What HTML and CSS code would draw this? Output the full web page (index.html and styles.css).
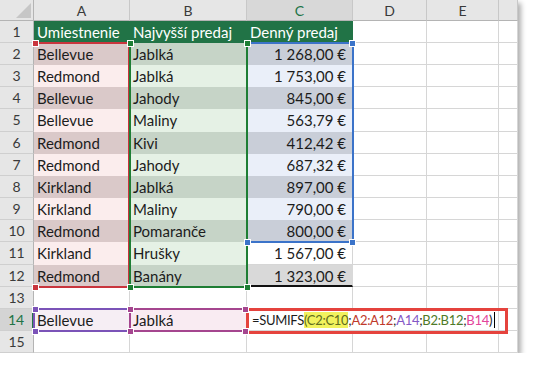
FILE: index.html
```html
<!DOCTYPE html>
<html lang="sk">
<head>
<meta charset="utf-8">
<title>SUMIFS</title>
<link rel="stylesheet" href="styles.css">
</head>
<body>
<div class="sheet">
  <div class="c corner"><svg width="33" height="20" viewBox="0 0 33 20"><polygon points="31,3 31,18 16,18" fill="#c6c6c6"/></svg></div>
  <div class="c ch">A</div><div class="c ch">B</div><div class="c ch sel">C</div><div class="c ch">D</div><div class="c ch">E</div><div class="c ch"></div>

  <div class="c rh">1</div><div class="c hd">Umiestnenie</div><div class="c hd">Najvyšší predaj</div><div class="c hd">Denný predaj</div><div class="c"></div><div class="c"></div><div class="c"></div>
  <div class="c rh">2</div><div class="c a1">Bellevue</div><div class="c b1">Jablká</div><div class="c c1 num">1 268,00 €</div><div class="c"></div><div class="c"></div><div class="c"></div>
  <div class="c rh">3</div><div class="c a0">Redmond</div><div class="c b0">Jablká</div><div class="c c0 num">1 753,00 €</div><div class="c"></div><div class="c"></div><div class="c"></div>
  <div class="c rh">4</div><div class="c a1">Bellevue</div><div class="c b1">Jahody</div><div class="c c1 num">845,00 €</div><div class="c"></div><div class="c"></div><div class="c"></div>
  <div class="c rh">5</div><div class="c a0">Bellevue</div><div class="c b0">Maliny</div><div class="c c0 num">563,79 €</div><div class="c"></div><div class="c"></div><div class="c"></div>
  <div class="c rh">6</div><div class="c a1">Redmond</div><div class="c b1">Kivi</div><div class="c c1 num">412,42 €</div><div class="c"></div><div class="c"></div><div class="c"></div>
  <div class="c rh">7</div><div class="c a0">Redmond</div><div class="c b0">Jahody</div><div class="c c0 num">687,32 €</div><div class="c"></div><div class="c"></div><div class="c"></div>
  <div class="c rh">8</div><div class="c a1">Kirkland</div><div class="c b1">Jablká</div><div class="c c1 num">897,00 €</div><div class="c"></div><div class="c"></div><div class="c"></div>
  <div class="c rh">9</div><div class="c a0">Kirkland</div><div class="c b0">Maliny</div><div class="c c0 num">790,00 €</div><div class="c"></div><div class="c"></div><div class="c"></div>
  <div class="c rh">10</div><div class="c a1">Redmond</div><div class="c b1">Pomaranče</div><div class="c c1 num">800,00 €</div><div class="c"></div><div class="c"></div><div class="c"></div>
  <div class="c rh">11</div><div class="c a0">Kirkland</div><div class="c b0">Hrušky</div><div class="c num">1 567,00 €</div><div class="c"></div><div class="c"></div><div class="c"></div>
  <div class="c rh">12</div><div class="c a1">Redmond</div><div class="c b1">Banány</div><div class="c g12 num">1 323,00 €</div><div class="c"></div><div class="c"></div><div class="c"></div>
  <div class="c rh">13</div><div class="c"></div><div class="c"></div><div class="c"></div><div class="c"></div><div class="c"></div><div class="c"></div>
  <div class="c rh rsel">14</div><div class="c p14">Bellevue</div><div class="c m14">Jablká</div><div class="c fx">=SUMIFS<span class="hl">(C2:C10</span>;<span class="fr">A2:A12</span>;<span class="fp">A14</span>;<span class="fg">B2:B12</span>;<span class="fm">B14</span>)<span class="caret"></span></div><div class="c"></div>
  <div class="c rh">15</div><div class="c"></div><div class="c"></div><div class="c"></div><div class="c"></div><div class="c"></div><div class="c"></div>

  <div class="rng r-red"></div>
  <div class="rng r-blue"></div>
  <div class="rng r-green"></div>
  <div class="rng r-purple"></div>
  <div class="rng r-mag"></div>
  <div class="fxbox"></div>

  <div class="hnd h-red" style="left:32px;top:40px"></div>
  <div class="hnd h-red" style="left:32px;top:284px"></div>
  <div class="hnd h-green" style="left:127px;top:40px"></div>
  <div class="hnd h-green" style="left:127px;top:284px"></div>
  <div class="hnd h-green" style="left:244px;top:40px"></div>
  <div class="hnd h-green" style="left:244px;top:284px"></div>
  <div class="hnd h-blue" style="left:349px;top:40px"></div>
  <div class="hnd h-blue" style="left:349px;top:239px"></div>
  <div class="hnd h-blue" style="left:244px;top:239px"></div>
  <div class="hnd h-purple" style="left:32px;top:306px"></div>
  <div class="hnd h-purple" style="left:32px;top:328px"></div>
  <div class="hnd h-mag" style="left:127px;top:306px"></div>
  <div class="hnd h-mag" style="left:127px;top:328px"></div>
  <div class="hnd h-mag" style="left:242px;top:306px"></div>
  <div class="hnd h-mag" style="left:242px;top:328px"></div>
</div>
</body>
</html>
```
FILE: styles.css
```css
html, body {
  margin: 0;
  padding: 0;
  background: #ffffff;
}

.sheet {
  position: relative;
  width: 518px;
  height: 353px;
  display: grid;
  grid-template-columns: 34px 96px 117px 106px 74px 72px 19px;
  grid-template-rows: 21px 22px 22px 22px 22px 23px 22px 22px 22px 22px 22px 23px 22px 22px 22px 22px;
  background: #ffffff;
  box-shadow: 3px 3px 5px rgba(0, 0, 0, 0.32);
  font-family: Lato, "Liberation Sans", sans-serif;
  overflow: visible;
}

.c {
  box-sizing: border-box;
  border-right: 1px solid #d6d6d6;
  border-bottom: 1px solid #d6d6d6;
  padding: 1px 3px 0 3px;
  font-size: 15px;
  line-height: 20px;
  color: #1c1c1c;
  white-space: nowrap;
  overflow: hidden;
}

.corner {
  background: #e6e6e6;
  border-color: #b4b4b4;
  padding: 0;
}
.corner svg { display: block; }

.ch {
  background: #e6e6e6;
  border-right-color: #c8c8c8;
  border-bottom-color: #b4b4b4;
  text-align: center;
  color: #3a3a3a;
  font-size: 14px;
  line-height: 19px;
}
.ch.sel {
  background: #d8d8d8;
  color: #217346;
}

.rh {
  background: #e6e6e6;
  border-right-color: #b4b4b4;
  border-bottom-color: #cfcfcf;
  text-align: center;
  color: #3a3a3a;
  font-size: 14px;
}
.rh.rsel {
  background: #d4d4d4;
  color: #217346;
  border-right: 2px solid #217346;
}

.hd {
  background: #217346;
  border-color: #217346;
  color: #ffffff;
}

.a1 { background: #dac9c9; border-color: #dac9c9; }
.a0 { background: #fbeded; border-color: #fbeded; }
.b1 { background: #c6d4c7; border-color: #c6d4c7; }
.b0 { background: #e5f1e5; border-color: #e5f1e5; }
.c1 { background: #c9ced8; border-color: #c9ced8; }
.c0 { background: #eaeff9; border-color: #eaeff9; }
.g12 { background: #d9d9d9; border-right-color: #d9d9d9; border-bottom: 2px solid #111111; }

.p14 { background: #f6eef4; border-color: #f6eef4; }
.m14 { background: #f9ebf2; border-color: #f9ebf2; }

.num {
  text-align: right;
  padding-right: 6px;
}

.fx {
  grid-column: span 3;
  padding-left: 5px;
  font-size: 13px;
  letter-spacing: -0.3px;
  overflow: visible;
  position: relative;
  z-index: 2;
}
.hl { background: #f2f25e; color: #5f6d1c; }
.fr { color: #c0392b; }
.fp { color: #8457c6; }
.fg { color: #4f7a28; }
.fm { color: #e3449a; }
.caret {
  display: inline-block;
  width: 1px;
  height: 16px;
  background: #000000;
  vertical-align: -3px;
  margin-left: 2px;
}

.rng {
  position: absolute;
  box-sizing: border-box;
  border: 2px solid transparent;
}
.r-red {
  left: 34px; top: 42px; width: 96px; height: 246px;
  border-color: #c9353d;
  border-left: 0;
}
.r-blue {
  left: 246px; top: 42px; width: 108px; height: 201px;
  border-color: #3b73c9;
}
.r-green {
  left: 129px; top: 42px; width: 119px; height: 246px;
  border-color: #1e7e34;
  border-top-color: transparent;
}
.r-purple {
  left: 33px; top: 308px; width: 98px; height: 24px;
  border-color: #7b53b8;
}
.r-mag {
  left: 129px; top: 308px; width: 119px; height: 24px;
  border-color: #a5468f;
}
.fxbox {
  position: absolute;
  left: 246px; top: 308px; width: 262px; height: 26px;
  box-sizing: border-box;
  border: 3px solid #e5433d;
  z-index: 3;
}

.hnd {
  position: absolute;
  width: 5px;
  height: 5px;
  border: 1px solid #ffffff;
  z-index: 4;
}
.h-red { background: #c9353d; }
.h-green { background: #1e7e34; }
.h-blue { background: #3b73c9; }
.h-purple { background: #7b53b8; }
.h-mag { background: #a5468f; }
```
